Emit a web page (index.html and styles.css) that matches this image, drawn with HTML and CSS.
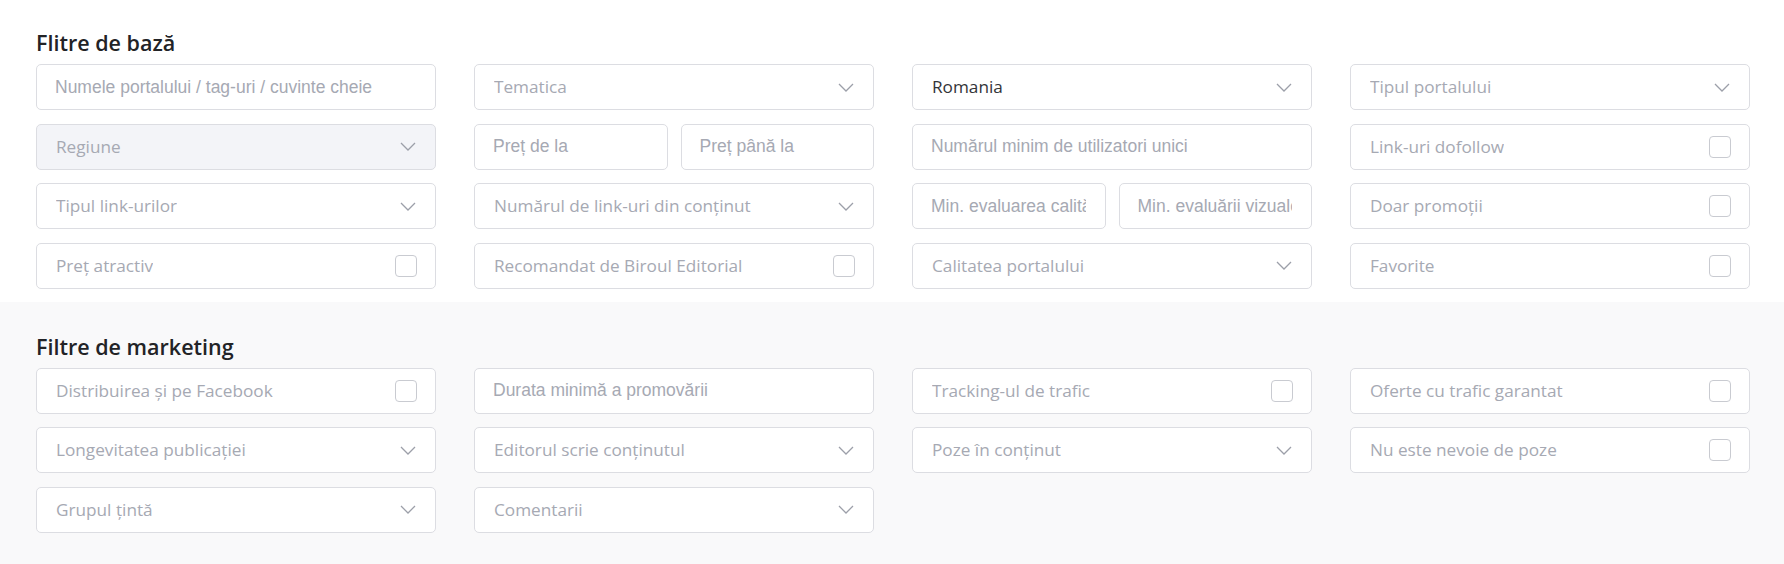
FILE: index.html
```html
<!DOCTYPE html>
<html lang="ro">
<head>
<meta charset="utf-8">
<title>Filtre</title>
<link rel="stylesheet" href="styles.css">
</head>
<body>
<section class="block block-basic">
  <h2 class="title">Flitre de bază</h2>
  <div class="grid">
    <input class="field input" placeholder="Numele portalului / tag-uri / cuvinte cheie">
    <div class="field select"><span class="label">Tematica</span><svg class="chev" viewBox="0 0 16 9"><path d="M1 1l7 7 7-7"/></svg></div>
    <div class="field select"><span class="label value">Romania</span><svg class="chev" viewBox="0 0 16 9"><path d="M1 1l7 7 7-7"/></svg></div>
    <div class="field select"><span class="label">Tipul portalului</span><svg class="chev" viewBox="0 0 16 9"><path d="M1 1l7 7 7-7"/></svg></div>

    <div class="field select disabled"><span class="label">Regiune</span><svg class="chev" viewBox="0 0 16 9"><path d="M1 1l7 7 7-7"/></svg></div>
    <div class="pair">
      <input class="field input" placeholder="Preț de la">
      <input class="field input" placeholder="Preț până la">
    </div>
    <input class="field input" placeholder="Numărul minim de utilizatori unici">
    <div class="field check"><span class="label">Link-uri dofollow</span><span class="box"></span></div>

    <div class="field select"><span class="label">Tipul link-urilor</span><svg class="chev" viewBox="0 0 16 9"><path d="M1 1l7 7 7-7"/></svg></div>
    <div class="field select"><span class="label">Numărul de link-uri din conținut</span><svg class="chev" viewBox="0 0 16 9"><path d="M1 1l7 7 7-7"/></svg></div>
    <div class="pair">
      <input class="field input" placeholder="Min. evaluarea calității">
      <input class="field input" placeholder="Min. evaluării vizuale">
    </div>
    <div class="field check"><span class="label">Doar promoții</span><span class="box"></span></div>

    <div class="field check"><span class="label">Preț atractiv</span><span class="box"></span></div>
    <div class="field check"><span class="label">Recomandat de Biroul Editorial</span><span class="box"></span></div>
    <div class="field select"><span class="label">Calitatea portalului</span><svg class="chev" viewBox="0 0 16 9"><path d="M1 1l7 7 7-7"/></svg></div>
    <div class="field check"><span class="label">Favorite</span><span class="box"></span></div>
  </div>
</section>
<section class="block block-marketing">
  <h2 class="title">Filtre de marketing</h2>
  <div class="grid">
    <div class="field check"><span class="label">Distribuirea și pe Facebook</span><span class="box"></span></div>
    <input class="field input" placeholder="Durata minimă a promovării">
    <div class="field check"><span class="label">Tracking-ul de trafic</span><span class="box"></span></div>
    <div class="field check"><span class="label">Oferte cu trafic garantat</span><span class="box"></span></div>

    <div class="field select"><span class="label">Longevitatea publicației</span><svg class="chev" viewBox="0 0 16 9"><path d="M1 1l7 7 7-7"/></svg></div>
    <div class="field select"><span class="label">Editorul scrie conținutul</span><svg class="chev" viewBox="0 0 16 9"><path d="M1 1l7 7 7-7"/></svg></div>
    <div class="field select"><span class="label">Poze în conținut</span><svg class="chev" viewBox="0 0 16 9"><path d="M1 1l7 7 7-7"/></svg></div>
    <div class="field check"><span class="label">Nu este nevoie de poze</span><span class="box"></span></div>

    <div class="field select"><span class="label">Grupul țintă</span><svg class="chev" viewBox="0 0 16 9"><path d="M1 1l7 7 7-7"/></svg></div>
    <div class="field select"><span class="label">Comentarii</span><svg class="chev" viewBox="0 0 16 9"><path d="M1 1l7 7 7-7"/></svg></div>
  </div>
</section>
</body>
</html>
```

FILE: styles.css
```css
* { box-sizing: border-box; }

html, body {
  margin: 0;
  padding: 0;
  background: #ffffff;
  font-family: "Open Sans", "Noto Sans", sans-serif;
}

.block {
  padding: 29px 34px 13px 36px;
}

.block-marketing {
  background: #f9f9fa;
  padding-top: 31px;
  padding-bottom: 40px;
}

.title {
  margin: 0 0 8px 0;
  font-size: 21.5px;
  line-height: 27px;
  font-weight: 600;
  color: #222326;
}

.grid {
  display: grid;
  grid-template-columns: repeat(4, 1fr);
  column-gap: 38px;
  row-gap: 13.6px;
}

.pair {
  display: grid;
  grid-template-columns: 1fr 1fr;
  column-gap: 13px;
}

.field {
  height: 46px;
  width: 100%;
  border: 1px solid #dcdde2;
  border-radius: 5px;
  background: #ffffff;
  margin: 0;
}

.input {
  display: block;
  padding: 0 19px 0 18px;
  font-family: "Liberation Sans", Arial, sans-serif;
  font-size: 17.5px;
  color: #333333;
  outline: none;
  min-width: 0;
}

.input::placeholder {
  color: #a6a9b3;
  opacity: 1;
}

.select, .check {
  display: flex;
  align-items: center;
  justify-content: space-between;
  padding: 0 18px 0 19px;
}

.select {
  padding-right: 19px;
}

.label {
  font-size: 17.2px;
  line-height: 24px;
  color: #a6a9b3;
  white-space: nowrap;
  overflow: hidden;
}

.label.value {
  color: #333438;
}

.disabled {
  background: #f3f4f8;
}

.chev {
  width: 16px;
  height: 9px;
  flex: none;
  fill: none;
  stroke: #9c9fa9;
  stroke-width: 1.3;
}

.box {
  width: 22px;
  height: 22px;
  flex: none;
  border: 1.5px solid #c9cbd1;
  border-radius: 4px;
  background: #ffffff;
}
```
